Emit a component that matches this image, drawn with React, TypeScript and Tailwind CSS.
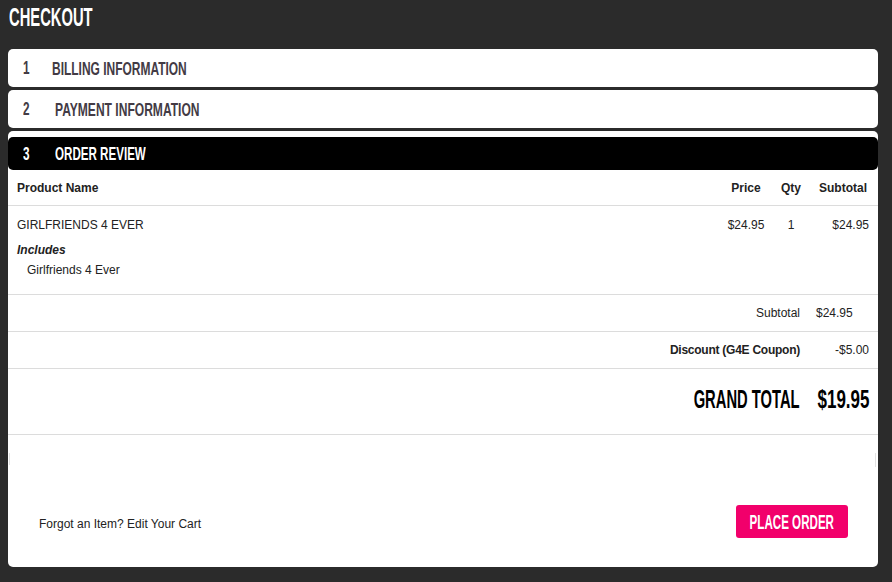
import React from 'react';

const cond = "inline-block shrink-0 whitespace-nowrap font-['Liberation_Sans',Arial,sans-serif] font-bold";
const body = "font-['Liberation_Sans',Arial,sans-serif] text-[12px] leading-[16px] text-[#222]";

function StepBar({ num, label, numWidth, labelScale }: { num: string; label: string; numWidth: string; labelScale: string }) {
  return (
    <div className="flex h-[38px] items-center rounded-[5px] bg-white pl-[15px] text-[#433b45]">
      <div className={numWidth}>
        <span className={`${cond} origin-left scale-x-[0.62] text-[19px] leading-[19px]`}>{num}</span>
      </div>
      <span className={`${cond} origin-left ${labelScale} text-[19px] leading-[19px]`}>{label}</span>
    </div>
  );
}

export default function App() {
  return (
    <div className="h-[582px] w-[892px] overflow-hidden bg-[#2b2b2b] pl-[8px] pr-[14px]">
      <div className="h-[49px] pl-px pt-[5px]">
        <span className={`${cond} origin-left scale-x-[0.59] text-[25px] leading-[25px] text-white`}>CHECKOUT</span>
      </div>

      <div className="flex flex-col gap-[3px]">
        <StepBar num="1" label="BILLING INFORMATION" numWidth="w-[29px]" labelScale="scale-x-[0.63]" />
        <StepBar num="2" label="PAYMENT INFORMATION" numWidth="w-[32px]" labelScale="scale-x-[0.635]" />

        <div className="h-[436px] rounded-[5px] bg-white pt-[6px]">
          <div className="flex h-[33px] items-center rounded-[5px] bg-black pl-[15px] text-white">
            <div className="w-[32px]">
              <span className={`${cond} origin-left scale-x-[0.62] text-[19px] leading-[19px]`}>3</span>
            </div>
            <span className={`${cond} origin-left scale-x-[0.61] text-[19px] leading-[19px]`}>ORDER REVIEW</span>
          </div>

          {/* table head */}
          <div className={`${body} flex h-[36px] items-center border-b border-[#dcdcdc] font-bold`}>
            <div className="flex-1 pl-[9px]">Product Name</div>
            <div className="w-[68px] text-center">Price</div>
            <div className="w-[22px] text-center">Qty</div>
            <div className="w-[76px] pr-[11px] text-right">Subtotal</div>
          </div>

          {/* item */}
          <div className={`${body} h-[89px] border-b border-[#dcdcdc] pt-[11px]`}>
            <div className="flex">
              <div className="flex-1 pl-[9px]">GIRLFRIENDS 4 EVER</div>
              <div className="w-[68px] text-center">$24.95</div>
              <div className="w-[22px] text-center">1</div>
              <div className="w-[76px] pr-[9px] text-right">$24.95</div>
            </div>
            <div className="mt-[9px] pl-[9px] font-bold italic">Includes</div>
            <div className="mt-[4px] pl-[19px]">Girlfriends 4 Ever</div>
          </div>

          {/* totals */}
          <div className={`${body} flex h-[37px] items-center justify-end border-b border-[#dcdcdc]`}>
            <div className="text-right">Subtotal</div>
            <div className="ml-[16px] w-[62px] pr-[9px] text-left">$24.95</div>
          </div>
          <div className={`${body} flex h-[37px] items-center justify-end border-b border-[#dcdcdc]`}>
            <div className="text-right font-bold tracking-[-0.25px]">Discount (G4E Coupon)</div>
            <div className="ml-[16px] w-[62px] pr-[9px] text-right">-$5.00</div>
          </div>
          <div className="flex h-[66px] items-center justify-end border-b border-[#dcdcdc] pb-[5px] text-black">
            <span className={`${cond} origin-right scale-x-[0.59] text-[25px] leading-[25px]`}>GRAND TOTAL</span>
            <div className="ml-[16px] flex w-[62px] justify-end pr-[9px]">
              <span className={`${cond} origin-right scale-x-[0.68] text-[25px] leading-[25px]`}>$19.95</span>
            </div>
          </div>

          <div className="flex h-[12px] justify-between pt-[18px]">
            <div className="ml-px h-[12px] w-px bg-[#e2e2e2]" />
            <div className="mr-[2px] h-[14px] w-px bg-[#e2e2e2]" />
          </div>

          {/* footer */}
          <div className="mt-[52px] flex items-center justify-between pl-[31px] pr-[30px]">
            <div className={`${body} mt-[5px]`}>Forgot an Item? Edit Your Cart</div>
            <button className="flex h-[33px] w-[112px] items-center justify-center overflow-visible rounded-[3px] bg-[#f2006b] text-white">
              <span className={`${cond} origin-center scale-x-[0.58] text-[20px] leading-[20px]`}>PLACE ORDER</span>
            </button>
          </div>
        </div>
      </div>
    </div>
  );
}
